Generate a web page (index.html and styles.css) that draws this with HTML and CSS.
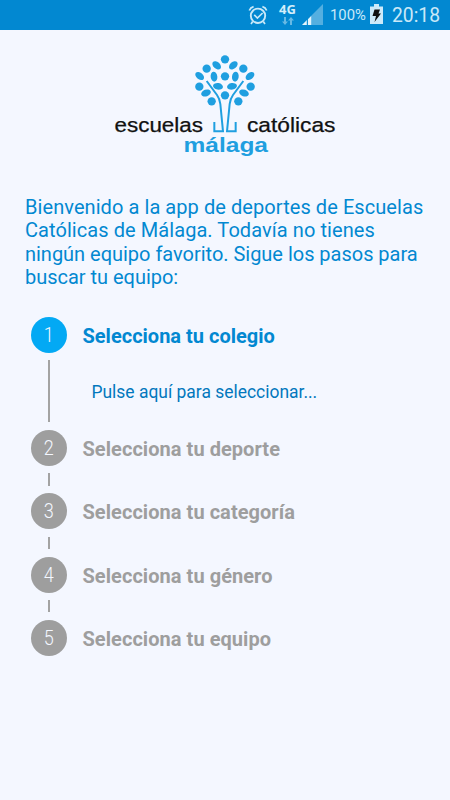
FILE: index.html
```html
<!DOCTYPE html>
<html lang="es">
<head>
<meta charset="utf-8">
<title>Escuelas Católicas Málaga</title>
<link rel="stylesheet" href="styles.css">
</head>
<body>
<header class="status">
  <svg class="alarm" width="20" height="22" viewBox="0 0 20 22" fill="none" stroke="#c9e8f8">
    <circle cx="10" cy="11.8" r="7.2" stroke-width="1.9"/>
    <path d="M1.3 6.5Q2.4 3.5 5.6 2.6M18.7 6.5Q17.6 3.5 14.4 2.6M4.7 17.5L3 20M15.3 17.5L17 20" stroke-width="1.7"/>
    <path d="M6.2 10.8L9.4 14L14.6 9" stroke-width="1.7"/>
  </svg>
  <div class="network">
    <span>4G</span>
    <svg width="12" height="8" viewBox="0 0 12 8" fill="#67b9e4"><path d="M2 0h2v4.5h2L3 8 0 4.500h2zM8 8h2V3.500h2L9 0 6 3.500h2z"/></svg>
  </div>
  <svg class="signal" width="22" height="22" viewBox="0 0 22 22"><path d="M0 21L21 0v21z" fill="#54afe0"/><path d="M0 21L5 16v5zM5.800 15.500L9.200 12v9H5.800z" fill="#e3f4fc"/><path d="M5.300 14.500V21" stroke="#0288d1"/></svg>
  <span class="percent">100%</span>
  <svg class="battery" width="13" height="21" viewBox="0 0 13 21"><path d="M4 0h5v2.500h4V20H0V2.500h4z" fill="#cdeafa"/><path d="M4.500 5.500h5.500L8.500 9.500H11L4.500 18 6 12H2.500z" fill="#111"/></svg>
  <time class="clock">20:18</time>
</header>
<main class="page">
  <svg class="logo" width="230" height="110" viewBox="0 0 230 110">
    <g transform="translate(75 -2) scale(.33333)">
      <g fill="#1f9fe0">
        <circle cx="120" cy="34" r="12.500"/><circle cx="65" cy="62" r="12.500"/><circle cx="175" cy="62" r="12.500"/>
        <circle cx="120" cy="85" r="12.500"/><circle cx="43" cy="116" r="12.500"/><circle cx="197" cy="116" r="12.500"/>
        <circle cx="120" cy="142" r="12.500"/><circle cx="80" cy="160" r="12.500"/><circle cx="160" cy="160" r="12.500"/>
        <ellipse cx="95" cy="52" rx="15" ry="10" transform="rotate(42 95 52)"/>
        <ellipse cx="145" cy="52" rx="15" ry="10" transform="rotate(-42 145 52)"/>
        <ellipse cx="44" cy="84" rx="15" ry="10" transform="rotate(40 44 84)"/>
        <ellipse cx="195" cy="84" rx="15" ry="10" transform="rotate(-40 195 84)"/>
        <ellipse cx="87" cy="86" rx="10" ry="15" transform="rotate(-8 87 86)"/>
        <ellipse cx="151" cy="86" rx="10" ry="15" transform="rotate(8 151 86)"/>
        <ellipse cx="99" cy="115" rx="15" ry="10" transform="rotate(10 99 115)"/>
        <ellipse cx="141" cy="115" rx="15" ry="10" transform="rotate(-10 141 115)"/>
        <ellipse cx="63" cy="135" rx="15" ry="10" transform="rotate(-20 63 135)"/>
        <ellipse cx="177" cy="135" rx="15" ry="10" transform="rotate(20 177 135)"/>
      </g>
      <path d="M65 99L96 141Q104 152 106 168L114 250H88V222M175 99L144 141Q136 152 134 168L126 250H152V222" fill="none" stroke="#1f9fe0" stroke-width="6"/>
    </g>
    <text class="brand" x="4.500" y="82" textLength="88.500" lengthAdjust="spacingAndGlyphs">escuelas</text>
    <text class="brand" x="137" y="82" textLength="88.500" lengthAdjust="spacingAndGlyphs">católicas</text>
    <text class="city" x="73.500" y="102" textLength="84.500" lengthAdjust="spacingAndGlyphs">málaga</text>
  </svg>
  <p class="intro"><span class="wide">Bienvenido a la app de deportes de Escuelas Católicas de Málaga. Todavía no tienes</span> ningún equipo favorito. Sigue los pasos para buscar tu equipo:</p>
  <ol class="steps">
    <li class="step active">
      <div class="rail"><span class="badge"><b>1</b></span><i class="line"></i></div>
      <div><h2>Selecciona tu colegio</h2><div class="select">Pulse aquí para seleccionar...</div></div>
    </li>
    <li class="step"><div class="rail"><span class="badge"><b>2</b></span><i class="line"></i></div><h2>Selecciona tu deporte</h2></li>
    <li class="step"><div class="rail"><span class="badge"><b>3</b></span><i class="line"></i></div><h2>Selecciona tu categoría</h2></li>
    <li class="step"><div class="rail"><span class="badge"><b>4</b></span><i class="line"></i></div><h2>Selecciona tu género</h2></li>
    <li class="step"><div class="rail"><span class="badge"><b>5</b></span></div><h2>Selecciona tu equipo</h2></li>
  </ol>
</main>
</body>
</html>
```
FILE: styles.css
```css
* { box-sizing: border-box; }
body {
  margin: 0;
  height: 800px;
  overflow: hidden;
  background: #f4f7ff;
  color: #0288d1;
  font-family: Roboto, sans-serif;
}
.status {
  display: flex;
  justify-content: flex-end;
  height: 30px;
  padding-right: 11px;
  background: #0288d1;
  color: #c9e8f8;
}
.status svg { display: block; flex: none; }
.alarm { margin: 4px 11px 0 0; }
.network { width: 18px; margin-right: 5px; padding-top: 3px; }
.network span {
  display: block;
  font: bold 13px/13px "Open Sans", sans-serif;
  color: #d5eefa;
}
.network svg { margin: 1px 0 0 3px; }
.signal { margin: 4px 6px 0 0; }
.percent { width: 35px; margin-right: 5px; font-size: 14.800px; line-height: 31px; white-space: nowrap; }
.battery { margin-top: 4px; }
.clock { width: 47px; margin-left: 9px; font-size: 19.300px; line-height: 32px; white-space: nowrap; }
.page { padding: 20px 25px 0; }
.logo { display: block; margin: 0 auto; }
.brand { font: 20.500px "Liberation Sans", sans-serif; fill: #111; stroke: #111; stroke-width: .25px; }
.city { font: bold 19.500px "Liberation Sans", sans-serif; fill: #1f9fe0; }
.intro { margin: 36px 0 0; font-size: 20px; line-height: 23.400px; letter-spacing: -.02px; }
.wide { letter-spacing: .07px; }
.steps { margin: 27px 0 0; padding: 0 0 0 5px; list-style: none; }
.step { display: flex; gap: 15.500px; height: 63.300px; color: #9e9e9e; }
.step.active { height: 113.300px; color: #0288d1; }
.rail { display: flex; flex-direction: column; align-items: center; width: 37px; }
.badge {
  flex: none;
  width: 36px;
  height: 36px;
  border-radius: 50%;
  background: #9e9e9e;
  color: #f4f7ff;
  font-size: 21px;
  line-height: 37px;
  text-align: center;
}
.badge b { display: inline-block; font-weight: 300; transform: scaleX(.86); }
.active .badge { background: #03a9f4; }
.line { flex: 1; width: 2px; margin: 7.500px 0; background: #a3a3a3; }
h2 { margin: 0; font-size: 20px; font-weight: 700; line-height: 38px; letter-spacing: .05px; }
.active h2 { letter-spacing: 0; }
.select { margin: 26px 0 0 9px; color: #0277bd; font-size: 17.460px; line-height: 22px; }
```
